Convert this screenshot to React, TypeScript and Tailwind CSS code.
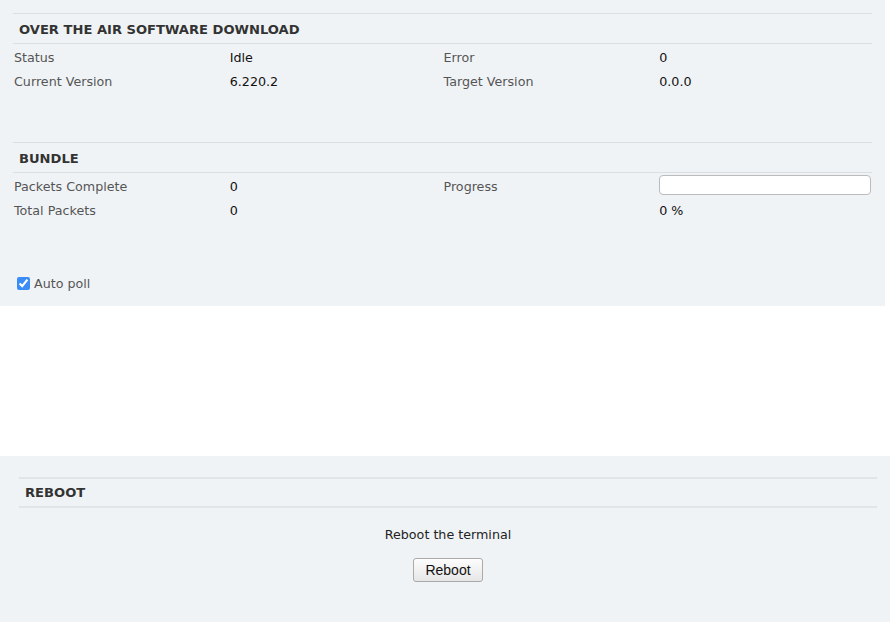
import React from 'react';

const font = "font-['DejaVu_Sans',Verdana,sans-serif]";

function Row({ cells }: { cells: React.ReactNode[] }) {
  return (
    <div className="grid grid-cols-4 h-6 items-center text-[12.7px]">
      {cells.map((c, i) => (
        <div key={i} className={i % 2 === 0 ? 'pl-px text-[#555]' : 'pl-0.5 text-[#111]'}>
          {c}
        </div>
      ))}
    </div>
  );
}

function SectionHead({ title }: { title: string }) {
  return (
    <div className="border-t border-b border-[#dcdfe2] h-[31px] flex items-center pl-1.5 pt-[3px] text-[13.1px] font-bold text-[#333]">
      {title}
    </div>
  );
}

export default function App() {
  return (
    <div className={`w-[890px] h-[622px] bg-white ${font}`}>
      <div className="w-[885px] h-[306px] bg-[#f0f3f6] pt-[13px] pl-[13px] pr-[13px] flex flex-col">
        <div className="w-[859px]">
          <SectionHead title="OVER THE AIR SOFTWARE DOWNLOAD" />
          <div className="pt-[2px]">
            <Row cells={['Status', 'Idle', 'Error', '0']} />
            <Row cells={['Current Version', '6.220.2', 'Target Version', '0.0.0']} />
          </div>
        </div>
        <div className="w-[859px] mt-[48px]">
          <SectionHead title="BUNDLE" />
          <div className="pt-[2px]">
            <Row
              cells={[
                'Packets Complete',
                '0',
                'Progress',
                <div className="h-[20px] w-[212px] mb-[4px] bg-white border border-[#bbb] rounded-[4px]" />,
              ]}
            />
            <Row cells={['Total Packets', '0', '', '0 %']} />
          </div>
        </div>
        <label className="mt-[51px] ml-1 flex items-center gap-1 text-[12.7px] text-[#555]">
          <input type="checkbox" defaultChecked className="w-[13px] h-[13px] accent-[#3b8cf6] m-0" />
          Auto poll
        </label>
      </div>
      <div className="h-[150px]" />
      <div className="w-[890px] h-[166px] bg-[#f0f3f6] pt-[21px] pl-[19px]">
        <div className="w-[858px]">
          <div className="border-t-2 border-b-2 border-[#e2e4e6] h-[31px] flex items-center pl-1.5 pt-px text-[13.1px] font-bold text-[#333]">
            REBOOT
          </div>
          <div className="flex flex-col items-center pt-[17px] gap-[14px]">
            <div className="text-[12.7px] text-[#222]">Reboot the terminal</div>
            <button className="h-6 w-[70px] border border-[#aaa] rounded-[3px] bg-gradient-to-b from-[#fdfdfd] to-[#e6e6e6] text-[14px] text-[#111] font-['Liberation_Sans',Arial,sans-serif]">
              Reboot
            </button>
          </div>
        </div>
      </div>
    </div>
  );
}
